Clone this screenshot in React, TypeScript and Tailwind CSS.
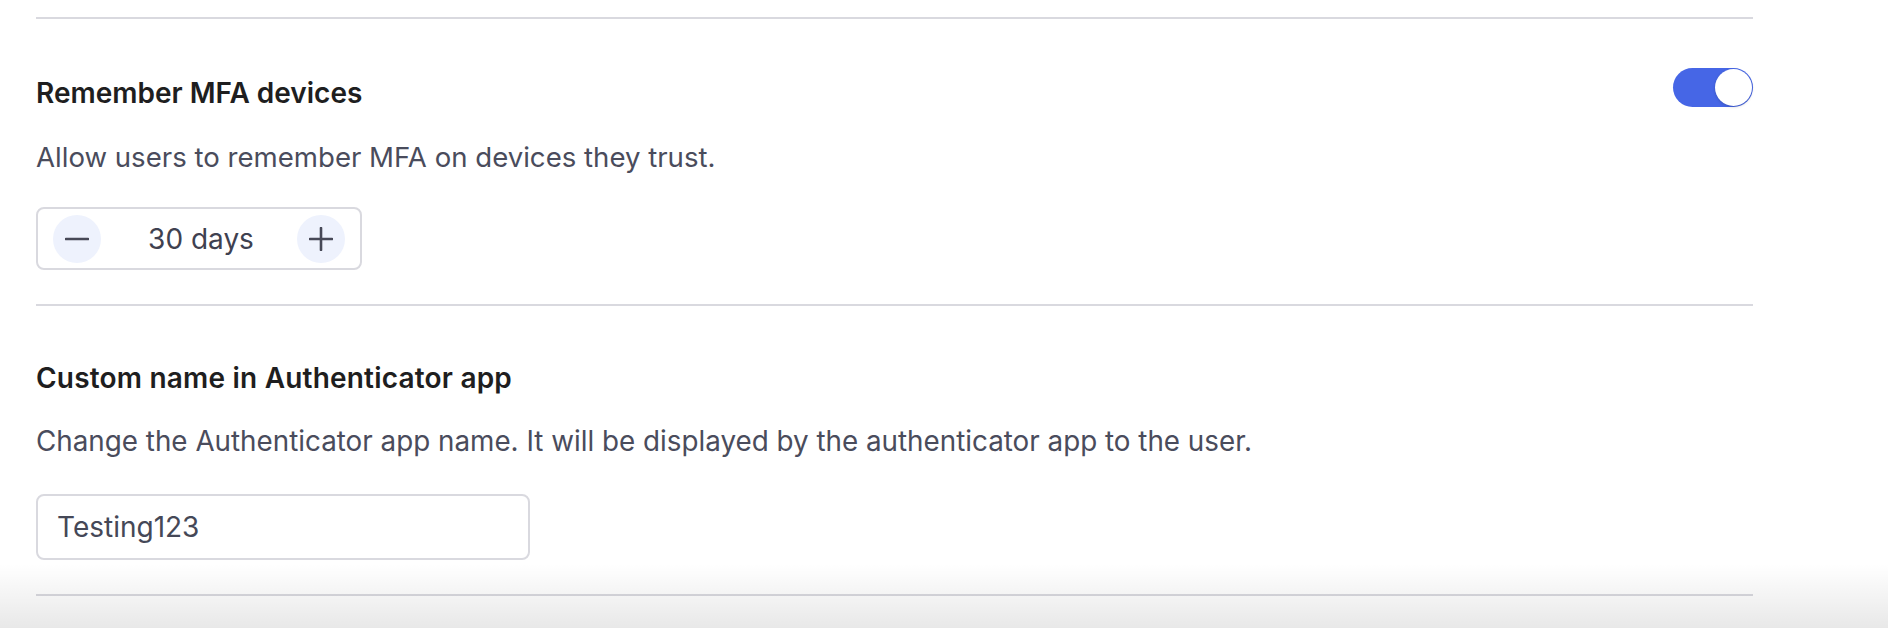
import React from "react";

function Divider() {
  return <div className="h-[2px] w-full bg-[#d9d9df]" />;
}

export default function App() {
  return (
    <div
      className="relative h-[628px] w-[1888px] overflow-hidden bg-white"
      style={{ fontFamily: "Inter, 'Noto Sans', sans-serif" }}
    >
      <div className="w-[1753px] pl-[36px] pt-[17px]">
        <Divider />

        {/* Section 1 */}
        <div className="mt-[49px] flex items-start justify-between">
          <div className="mt-[7px] text-[28px] font-semibold leading-[36px] text-[#1e1e20]">
            Remember MFA devices
          </div>
          <div className="relative h-[39px] w-[80px] rounded-full bg-[#4666e6]">
            <div className="absolute right-[1px] top-[1px] h-[37px] w-[37px] rounded-full bg-white shadow-[0_1px_3px_rgba(0,0,0,0.18)]" />
          </div>
        </div>
        <div className="mt-[28px] text-[27.6px] leading-[36px] text-[#4a4c5c]">
          Allow users to remember MFA on devices they trust.
        </div>
        <div className="mt-[32px] flex h-[63px] w-[326px] items-center justify-between rounded-[8px] border-2 border-[#d9d9df] px-[15px]">
          <button className="flex h-[48px] w-[48px] items-center justify-center rounded-full bg-[#eef2fd]">
            <svg width="24" height="24" viewBox="0 0 24 24" fill="none">
              <path d="M1 12h22" stroke="#474957" strokeWidth="2.6" strokeLinecap="round" />
            </svg>
          </button>
          <span className="pl-[4px] text-[28px] leading-[36px] text-[#3f4150]">30 days</span>
          <button className="flex h-[48px] w-[48px] items-center justify-center rounded-full bg-[#eef2fd]">
            <svg width="24" height="24" viewBox="0 0 24 24" fill="none">
              <path d="M1 12h22M12 1v22" stroke="#474957" strokeWidth="2.6" strokeLinecap="round" />
            </svg>
          </button>
        </div>
        <div className="mt-[34px]">
          <Divider />
        </div>

        {/* Section 2 */}
        <div className="mt-[54px] text-[28px] font-semibold leading-[36px] tracking-[0.2px] text-[#1e1e20]">
          Custom name in Authenticator app
        </div>
        <div className="mt-[27px] text-[27.8px] leading-[36px] text-[#4a4c5c]">
          Change the Authenticator app name. It will be displayed by the authenticator app to the user.
        </div>
        <div className="mt-[35px] flex h-[66px] w-[494px] items-center rounded-[8px] border-2 border-[#d9d9df] px-[19px]">
          <span className="text-[28px] leading-[36px] text-[#454857]">Testing123</span>
        </div>
        <div className="mt-[34px]">
          <Divider />
        </div>
      </div>

      <div className="pointer-events-none absolute bottom-0 left-0 h-[64px] w-full bg-gradient-to-b from-transparent to-[rgba(0,0,0,0.09)]" />
    </div>
  );
}
